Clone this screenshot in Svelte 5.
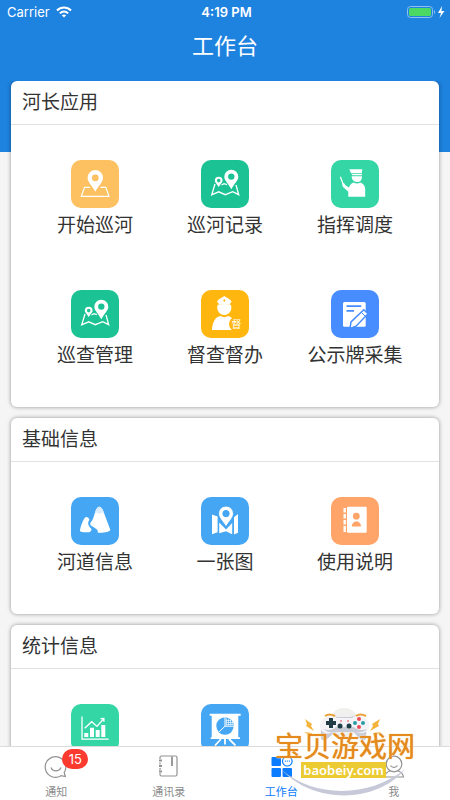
<script>
  const sections = [
    {
      title: '河长应用',
      items: [
        { label: '开始巡河', icon: start, color: '#fdc161' },
        { label: '巡河记录', icon: track, color: '#1bc394' },
        { label: '指挥调度', icon: officer, color: '#34d6a5' },
        { label: '巡查管理', icon: track, color: '#1bc394' },
        { label: '督查督办', icon: supervisor, color: '#ffb60f' },
        { label: '公示牌采集', icon: edit, color: '#478dff' }
      ]
    },
    {
      title: '基础信息',
      items: [
        { label: '河道信息', icon: river, color: '#45a6f3' },
        { label: '一张图', icon: map, color: '#45a6f3' },
        { label: '使用说明', icon: manual, color: '#ffa56a' }
      ]
    },
    {
      title: '统计信息',
      items: [
        { icon: chart, color: '#34d6a5' },
        { icon: board, color: '#45a6f3' }
      ]
    }
  ];
  const tabs = [
    { label: '通知', icon: notice, badge: 15 },
    { label: '通讯录', icon: contacts },
    { label: '工作台', icon: workbench, active: true },
    { label: '我', icon: me }
  ];
</script>

{#snippet start()}
  <path d="M19 27.300h-5.500l-3.200 9H38l-3.200-9H29.500" fill="none" stroke="#fff" stroke-width="1.200" />
  <path fill-rule="evenodd" d="M24.300 10a7.700 7.700 0 0 1 7.700 7.700c0 4.500-4.500 8-7.700 14-3.200-6-7.700-9.500-7.700-14a7.700 7.700 0 0 1 7.700-7.700zm0 4.600a3.300 3.300 0 1 0 0 6.600 3.300 3.300 0 0 0 0-6.600z" />
{/snippet}

{#snippet track()}
  <path d="M14 24l-3.300 10.800 7-3 6.600 2.900 7.400-3 6 3L35 25M20.500 25l2.500-1.300 3 1" fill="none" stroke="#fff" stroke-width="1.300" />
  <path fill-rule="evenodd" d="M30.300 9.700a7 7 0 0 1 7 7c0 4-4.500 7.300-7 12.500-2.500-5.200-7-8.500-7-12.500a7 7 0 0 1 7-7zm0 3.700a3.200 3.200 0 1 0 0 6.400 3.200 3.200 0 0 0 0-6.400z" />
  <path fill-rule="evenodd" d="M17.700 16.800a3.900 3.900 0 0 1 3.900 3.900c0 2-2.500 3.500-3.900 6.300-1.400-2.800-3.900-4.300-3.900-6.300a3.900 3.900 0 0 1 3.900-3.900zm0 2a1.800 1.800 0 1 0 0 3.600 1.800 1.800 0 0 0 0-3.600z" />
{/snippet}

{#snippet officer()}
  <path d="M18.300 9.300h13l-.5 4H20zM20.500 14h10.500v1.300H21.500zM20.700 16.200h10.200c.4 3.500-1.700 5.800-4.900 5.800-3 0-5.400-2.400-5.300-5.800z" />
  <path d="M22.600 22.500c2 1.400 5 1.400 7 0 3 1.300 4.600 3.700 4.600 7v7.200H17.300v-5l-5.500-5-.8-3.300 2-.5 1.400 2.300 3.600 2.300c.9-2.600 2.300-4.200 4.600-5z" />
  <path d="M9.400 16.800l2.600 7" stroke="#fff" stroke-width="1.200" />
{/snippet}

{#snippet supervisor()}
  <path fill-rule="evenodd" d="M16 11.500c1.800-3 4.200-3 7.300-5.500 3.100 2.500 5.500 2.500 7.300 5.500l-2 3H18.200zM23.300 9l-1.200 1.500 1.200 1.600 1.200-1.600z" />
  <path d="M16.700 14.800c4.400-1 8.800-1 13.200 0 1.700 4.500-1.200 10.200-6.600 10.200s-8.300-5.700-6.600-10.200z" />
  <path d="M11 40c.3-8.300 3.600-13.200 8.500-14 2.500 1.500 5 1.500 7.600 0 2.600.7 4.500 2 5.700 4v10z" />
  <circle cx="35.500" cy="34" r="7.500" fill="#ffb60f" />
  <text x="30.500" y="37.500" font-size="10">督</text>
{/snippet}

{#snippet edit()}
  <rect x="12" y="12" width="22.700" height="24.700" rx="1.500" />
  <path d="M15.500 16.200h14.800M15.500 20.800H23" stroke="#478dff" stroke-width="1.800" />
  <path d="M32.800 19.700l4.200 4.100-12 12.400-6 2.200 1-6.500z" stroke="#478dff" stroke-width="1.500" />
  <path d="M30.500 22.500l4 4" stroke="#478dff" stroke-width="1" />
{/snippet}

{#snippet river()}
  <path d="M28.300 9.700c2.200 0 3.400 2.500 4.700 6.300l6.200 16.500c.7 2.200-6 3.500-12.500 3.200 1.400-4-5.700-5.300-7.500-8.200-.5-2 2-3.500 2.700-5.500l2-6c1.200-3.800 2.400-6.300 4.400-6.300z" />
  <path d="M15.200 20c1.700 0 2.600 1 3.300 2.700-3.300 4.600.4 7 1.700 9 .8 1.400 0 2.700-2 3.600-4.600.2-9.200-.2-9.200-1.600 0-2.500 3.500-13.700 6.200-13.700z" />
  <path d="M23.700 16.500c1.200-4 2.500-6.800 4.600-6.800s3.500 2.800 4.900 6.800l-2.200-1-2.500 1.500-2.600-1.500z" fill="#dcecff" />
{/snippet}

{#snippet map()}
  <path d="M11 17.500l5.600 2v15.800L11 37.300zM18.200 25.500l6.800 7 6.200-6.500v11.200l-6.200-3-6.800 2zM33 20.300l4-3.300v18.700l-4 1.700z" />
  <path fill-rule="evenodd" stroke="#45a6f3" stroke-width="1" d="M25 9a7.500 7.500 0 0 1 7.500 7.500c0 4.500-4.600 8-7.500 13.500-2.900-5.500-7.500-9-7.500-13.500A7.500 7.500 0 0 1 25 9zm0 4.400a3.200 3.200 0 1 0 0 6.400 3.200 3.200 0 0 0 0-6.400z" />
{/snippet}

{#snippet manual()}
  <rect x="16" y="9.700" width="19.700" height="26" rx="1" />
  <path d="M13.700 11v4.500m0 1.500v4.500m0 1.500v4.500m0 1.500v6" stroke="#fff" stroke-width="2.400" />
  <circle cx="25.300" cy="19.200" r="3.400" fill="#ffa56a" />
  <path d="M20.800 29.500c0-3 1.800-5 4.500-5s4.700 2 4.700 5z" fill="#ffa56a" />
{/snippet}

{#snippet chart()}
  <path d="M11 12.500v22.700h26.700M13.700 24.300l7-6.600 5.300 4.700 6.500-7.400M29.500 14.600l3.400-.2v3.400" fill="none" stroke="#fff" stroke-width="1.300" />
  <path d="M13.300 29h4v4h-4zM19 23.700h4V33h-4zM24.700 26h4v7h-4zM30.300 21h4v12h-4z" />
{/snippet}

{#snippet board()}
  <path d="M8.700 9.700h31v2h-2.400v21.600H39v1.800H9.700v-1.800h1V11.700h-2z" />
  <path d="M20 35l-6 6.500M28 35l6.500 6.500M24 34v6.500" stroke="#fff" stroke-width="1.800" />
  <circle cx="24" cy="22" r="8.700" fill="#45a6f3" />
  <path d="M24 13v9.200h9M24 22.200l-6.300 6" fill="none" stroke="#fff" stroke-width="1" />
  <path d="M25.500 14.500v7M27.500 14.500v7M29.500 15.500v6M31.300 18v3M25 16.500h5M25 18.500h7M25 20.500h7" stroke="#fff" stroke-width=".6" />
{/snippet}

{#snippet notice()}
  <path d="M21.200 18.500A10.300 10.300 0 1 0 18 21.700l4.300.8zM8 13.500c1.700 4.500 8 4.500 10 0" />
{/snippet}

{#snippet contacts()}
  <path d="M4 5V3.500A1.500 1.500 0 0 1 5.500 2h14A1.500 1.500 0 0 1 21 3.500v17a1.500 1.500 0 0 1-1.500 1.500h-14A1.500 1.500 0 0 1 4 20.500V19M4 8.500v2M4 14v2" />
  <path d="M3 6.500h3M3 12h3M3 17.500h3M16 2.500V12" stroke-width="1.800" />
{/snippet}

{#snippet workbench()}
  <path fill="#0b7bff" stroke="none" d="M4.500 3H12a1 1 0 0 1 1 1v7a1 1 0 0 1-1 1H4.500a1 1 0 0 1-1-1V4a1 1 0 0 1 1-1zM4.500 14H12a1 1 0 0 1 1 1v7a1 1 0 0 1-1 1H4.500a1 1 0 0 1-1-1v-7a1 1 0 0 1 1-1zM15.500 14H23a1 1 0 0 1 1 1v7a1 1 0 0 1-1 1h-7.500a1 1 0 0 1-1-1v-7a1 1 0 0 1 1-1z" />
  <circle cx="19.300" cy="7.200" r="4.800" stroke="#0b7bff" />
  <path d="M16.800 7.200h1m1 0h1m1 0h1" stroke="#0b7bff" />
{/snippet}

{#snippet me()}
  <circle cx="13" cy="10" r="7.800" />
  <path d="M9.500 11.500c1.500 2.500 5.500 2.500 7 0M9 17c-3.500 1-5 3-5.500 6h19c-.5-3-2-5-5.500-6" />
{/snippet}

<div class="app">
  <header>
    <div class="status">
      <span class="carrier">Carrier
        <svg width="16" height="12" viewBox="0 0 16 12" fill="none" stroke="#fff" stroke-width="2" aria-hidden="true">
          <path d="M1 4.500c4-4 10-4 14 0M3.800 7.400c2.500-2.400 5.900-2.400 8.400 0" />
          <path d="M8 11.500L5.800 9.300c1.300-1.200 3.100-1.200 4.400 0z" fill="#fff" stroke="none" />
        </svg>
      </span>
      <time>4:19 PM</time>
      <svg class="battery" width="40" height="14" viewBox="0 0 40 14" aria-hidden="true">
        <rect x="1.500" y="1.500" width="25" height="11" rx="3" fill="none" stroke="#8fc0f0" />
        <rect x="3" y="3" width="22" height="8" rx="1.500" fill="#4bd964" />
        <path d="M28 5v4c1.500-.5 1.500-3.500 0-4z" fill="#8fc0f0" />
        <path d="M36 1l-4 7h3l-1.500 5 5-7h-3z" fill="#fff" />
      </svg>
    </div>
    <h1>工作台</h1>
  </header>

  <main>
    {#each sections as section}
      <section class="card">
        <h2>{section.title}</h2>
        <div class="grid">
          {#each section.items as item}
            <button class="tile" type="button">
              <svg class="icon" style:background={item.color} viewBox="0 0 48 48" fill="#fff" aria-hidden="true">
                {@render item.icon()}
              </svg>
              {#if item.label}<span>{item.label}</span>{/if}
            </button>
          {/each}
        </div>
      </section>
    {/each}
  </main>

  <nav>
    {#each tabs as tab}
      <a href="#{tab.label}" class:active={tab.active}>
        <span class="tab-icon">
          <svg width="26" height="26" viewBox="0 0 26 26" fill="none" stroke="#929292" stroke-width="1.200" aria-hidden="true">
            {@render tab.icon()}
          </svg>
          {#if tab.badge}<b class="badge">{tab.badge}</b>{/if}
        </span>
        <span>{tab.label}</span>
      </a>
    {/each}
  </nav>

  <div class="watermark">
    <svg width="140" height="96" viewBox="0 0 140 96" aria-hidden="true">
      <circle cx="69" cy="19" r="15" fill="#f0f0ef" />
      <path d="M7 66c32 28 88 28 123-1-28 35-92 35-123 1z" fill="#c7c9d8" />
      <path d="M51 13c3-2 8-2 11 0h14c3-2 8-2 11 0 4 5 5 14 4 22-4 4-9-3-13-8H60c-4 5-10 12-14 8-1-8 1-17 5-22z" fill="#c9cbd7" />
      <path d="M50 14c3-4 9-3 12 0h15c4-3 9-4 13 0 5 3 6 9 2 13-5 4-11 2-14-1H61c-4 4-10 5-14 1-4-4-2-11 3-13z" fill="#f4f4f8" />
      <path d="M49 25c4 2 9 1 12-2h18c3 3 8 4 13 2-2 3-8 4-13 3H60c-4 1-9 0-11-3z" fill="#c9cbd7" />
      <path d="M50 12c3-2 6-2 10 0M81 12c3-2 6-2 10 0" stroke="#eba033" stroke-width="2" fill="none" />
      <path d="M56 14v10M51 19h10" stroke="#203d48" stroke-width="4" />
      <g fill="#e94b56"><circle cx="84" cy="15" r="2" /><circle cx="84" cy="23" r="2" /></g>
      <g fill="#2a9ca5"><circle cx="80" cy="19" r="2" /><circle cx="88" cy="19" r="2" /></g>
      <circle cx="65" cy="22" r="2.500" fill="#203d48" /><circle cx="74" cy="22" r="2.500" fill="#203d48" />
      <path d="M65 17h2M72 17h2" stroke="#e94b56" />
      <path d="M30 15l7 5-1 2 3 5-8-5 1-2zM105 15l-8 5 1 2-3 5 9-5-1-2zM29 28l8 1-1 3zM106 28l-8 1 1 3z" fill="#f4b43c" />
    </svg>
    <strong>宝贝游戏网</strong>
    <span class="domain">baobeiy.com</span>
  </div>
</div>

<style>
  :global(body) { margin: 0; }
  .app {
    position: relative;
    display: flex;
    flex-direction: column;
    height: 100vh;
    overflow: hidden;
    background: linear-gradient(#1e82df 152px, #f5f5f5 152px);
    color: #333;
    font-family: "Liberation Sans", "Noto Sans CJK SC", sans-serif;
  }
  header { flex: none; color: #fff; }
  .status {
    display: grid;
    grid-template-columns: 1fr auto 1fr;
    align-items: center;
    height: 24px;
    padding: 0 4px 0 7px;
    font: 13px/24px Inter, sans-serif;
  }
  .carrier { display: flex; align-items: center; gap: 6px; }
  time { font-weight: 600; }
  .battery { justify-self: end; }
  h1 {
    margin: 0 0 11px;
    font-size: 22px;
    font-weight: 400;
    line-height: 46px;
    text-align: center;
  }
  main {
    flex: 1;
    display: flex;
    flex-direction: column;
    gap: 11px;
    min-height: 0;
    padding: 0 11px;
    overflow: hidden;
  }
  .card {
    flex: none;
    padding-bottom: 22px;
    border-radius: 6px;
    background: #fff;
    box-shadow: 0 0 4px rgba(0, 0, 0, .4);
  }
  h2 {
    margin: 0;
    padding-left: 11px;
    border-bottom: 1px solid #e2e2e2;
    font-size: 19px;
    font-weight: 400;
    line-height: 43px;
  }
  .grid {
    display: grid;
    grid-template-columns: repeat(3, 1fr);
    row-gap: 46px;
    padding: 35px 19px 11px;
  }
  .tile {
    display: flex;
    flex-direction: column;
    align-items: center;
    padding: 0;
    border: 0;
    background: none;
    color: inherit;
    font: inherit;
    font-size: 19px;
    line-height: 36px;
    white-space: nowrap;
  }
  .icon { width: 48px; height: 48px; border-radius: 10px; }
  nav {
    flex: none;
    display: grid;
    grid-template-columns: repeat(4, 1fr);
    height: 53px;
    border-top: 1px solid #dcdcdc;
    background: #fff;
  }
  nav a {
    display: flex;
    flex-direction: column;
    align-items: center;
    padding-top: 7px;
    color: #8c8c8c;
    font-size: 11px;
    line-height: 24px;
    text-decoration: none;
  }
  nav a.active { color: #0b7bff; }
  .tab-icon { position: relative; height: 26px; }
  .tab-icon svg { display: block; }
  .badge {
    position: absolute;
    left: 19px;
    top: -5px;
    width: 26px;
    border-radius: 10px;
    background: #fc3b30;
    color: #fff;
    font: 13px/20px Inter, sans-serif;
    text-align: center;
  }
  .watermark {
    position: absolute;
    right: 35px;
    bottom: 0;
    width: 140px;
    height: 96px;
    pointer-events: none;
  }
  .watermark strong {
    position: absolute;
    left: 0;
    top: 28px;
    color: #e58a1c;
    font-size: 28px;
    font-weight: 400;
    line-height: 32px;
    white-space: nowrap;
    text-shadow: 0 0 1px #e58a1c, 0 0 2px #fff;
  }
  .domain {
    position: absolute;
    left: 26px;
    top: 58px;
    width: 85px;
    background: #eccb32;
    color: #fff;
    font: 600 13px/16px "Noto Sans", sans-serif;
    text-align: center;
  }
</style>
